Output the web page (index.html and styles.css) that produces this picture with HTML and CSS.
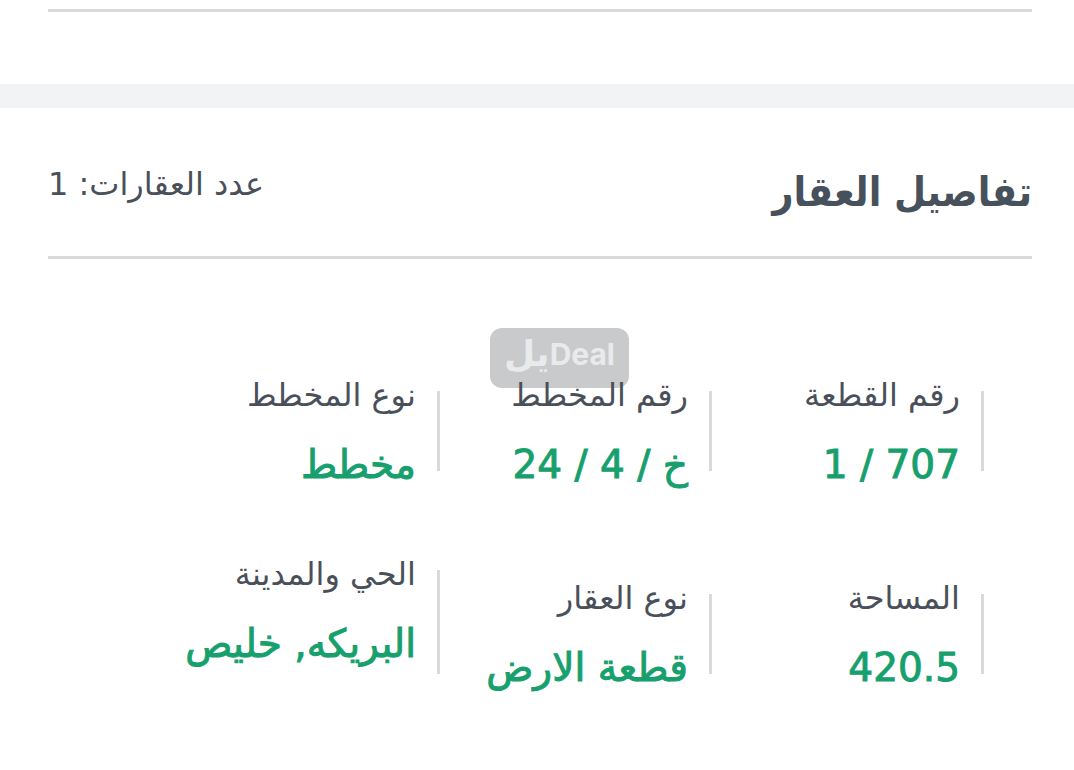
FILE: index.html
```
<!DOCTYPE html>
<html lang="ar" dir="rtl">
  <head>
    <meta charset="utf-8">
    <title>تفاصيل العقار</title>
    <link rel="stylesheet" href="styles.css">
  </head>

  <body>
    <div class="previous"></div>

    <section class="details">
      <header class="details-header">
        <h1>تفاصيل العقار</h1>
        <p class="count">عدد العقارات: 1</p>
      </header>

      <div class="watermark" dir="ltr">
        <span class="mark-ar">يل</span><span class="mark-en">Deal</span>
      </div>

      <dl class="grid">
        <div class="item">
          <dt>رقم القطعة</dt>
          <dd>707 / 1</dd>
        </div>
        <div class="item">
          <dt>رقم المخطط</dt>
          <dd>خ / 4 / 24</dd>
        </div>
        <div class="item">
          <dt>نوع المخطط</dt>
          <dd>مخطط</dd>
        </div>
        <div class="item">
          <dt>المساحة</dt>
          <dd>420.5</dd>
        </div>
        <div class="item">
          <dt>نوع العقار</dt>
          <dd>قطعة الارض</dd>
        </div>
        <div class="item tall">
          <dt>الحي والمدينة</dt>
          <dd>البريكه, خليص</dd>
        </div>
      </dl>
    </section>
  </body>
</html>
```

FILE: styles.css
```
* {
  box-sizing: border-box;
}

body {
  margin: 0;
  background: #fff;
  color: #4a5059;
  font-family: "DejaVu Sans", sans-serif;
}

.previous {
  padding: 9px 42px 72px 48px;
  border-bottom: 24px solid #f1f3f4;
}

.previous::before {
  content: "";
  display: block;
  height: 3px;
  background: #d9dadb;
}

.details {
  position: relative;
  padding: 0 42px 80px 48px;
}

.details-header {
  display: flex;
  justify-content: space-between;
  padding: 52px 0 32px;
  border-bottom: 3px solid #d9dadb;
}

h1 {
  margin: 0;
  color: #47515c;
  font-family: "DejaVu Sans Condensed", "DejaVu Sans", sans-serif;
  font-size: 41px;
  line-height: 64px;
}

.count {
  margin: 0;
  font-size: 32px;
  line-height: 48px;
}

.grid {
  position: relative;
  display: grid;
  grid-template-columns: repeat(3, 1fr);
  row-gap: 61px;
  align-items: end;
  margin: 112px 0 0;
  padding: 0 48px 0 120px;
}

/* the side bar starts a little below the top of the label */
.item {
  padding-right: 24px;
  background: linear-gradient(#d9dadb, #d9dadb) right 20px / 3px 80px no-repeat;
  white-space: nowrap;
}

.tall {
  padding-bottom: 24px;
  background-size: 3px 104px;
}

dt {
  font-size: 32px;
  line-height: 48px;
}

dd {
  margin: 22px 0 0;
  color: #17a06d;
  font-size: 39px;
  line-height: 48px;
  -webkit-text-stroke: 1px #17a06d;
}

.watermark {
  position: absolute;
  top: 220px;
  left: calc(50% - 47px);
  display: flex;
  justify-content: center;
  align-items: center;
  width: 139px;
  height: 60px;
  padding-bottom: 8px;
  border-radius: 12px;
  background: #c8cacb;
  color: #e9eaec;
  font-weight: bold;
  line-height: 40px;
}

.mark-ar {
  font-size: 36px;
}

.mark-en {
  font-family: Inter, sans-serif;
  font-size: 30px;
}
```
